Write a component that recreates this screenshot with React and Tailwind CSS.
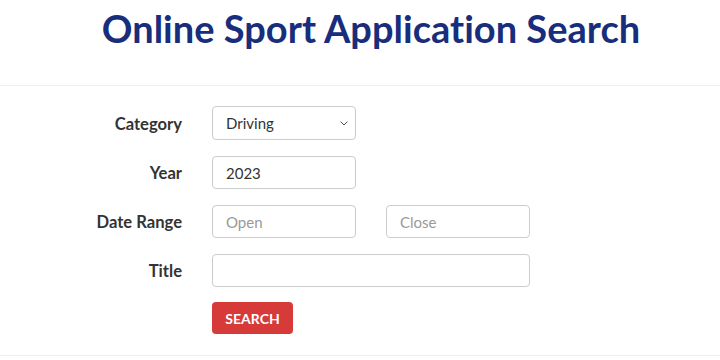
import React from 'react';

const Row = ({ label, children }) => (
    <div className="flex items-center">
        <label className="w-[182px] text-right text-[16.6px] font-bold text-[#333] pt-[2px]">{label}</label>
        <div className="ml-[30px] flex items-center gap-[30px]">{children}</div>
    </div>
);

const inputCls =
    'h-[33px] rounded-[4px] border border-[#ccc] bg-white px-[13px] text-[15px] text-[#333] placeholder:text-[#999] outline-none';

export default function App() {
    return (
        <div className="w-[720px] h-[360px] bg-white font-['Lato','Liberation_Sans',sans-serif] overflow-hidden [font-variant-ligatures:none]">
            <div className="h-[86px] border-b border-[#eee] flex justify-center pl-[22px]">
                <h1 className="mt-[1px] text-[38px] font-bold text-[#182d7c] leading-[54px] tracking-[0.01px] [font-feature-settings:'liga'_0,'clig'_0,'dlig'_0]">
                    Online Sport Application Search
                </h1>
            </div>
            <div className="border-b border-[#eee] pt-[20px] pb-[21px] flex flex-col gap-[16px]">
                <Row label="Category">
                    <div className={`${inputCls} w-[144px] h-[34px] flex items-center justify-between pr-[7px]`}>
                        <span>Driving</span>
                        <svg width="8" height="5" viewBox="0 0 8 5" fill="none">
                            <path d="M0.5 0.5L4 4L7.5 0.5" stroke="#555" strokeWidth="1" />
                        </svg>
                    </div>
                </Row>
                <Row label="Year">
                    <input className={`${inputCls} w-[144px]`} defaultValue="2023" />
                </Row>
                <Row label="Date Range">
                    <input className={`${inputCls} w-[144px]`} placeholder="Open" />
                    <input className={`${inputCls} w-[144px]`} placeholder="Close" />
                </Row>
                <Row label="Title">
                    <input className={`${inputCls} w-[318px]`} />
                </Row>
                <div className="pl-[212px] -mt-[1px]">
                    <button className="h-[32px] w-[81px] rounded-[4px] bg-[#d63b3a] text-white text-[14px] font-bold">
                        SEARCH
                    </button>
                </div>
            </div>
        </div>
    );
}
